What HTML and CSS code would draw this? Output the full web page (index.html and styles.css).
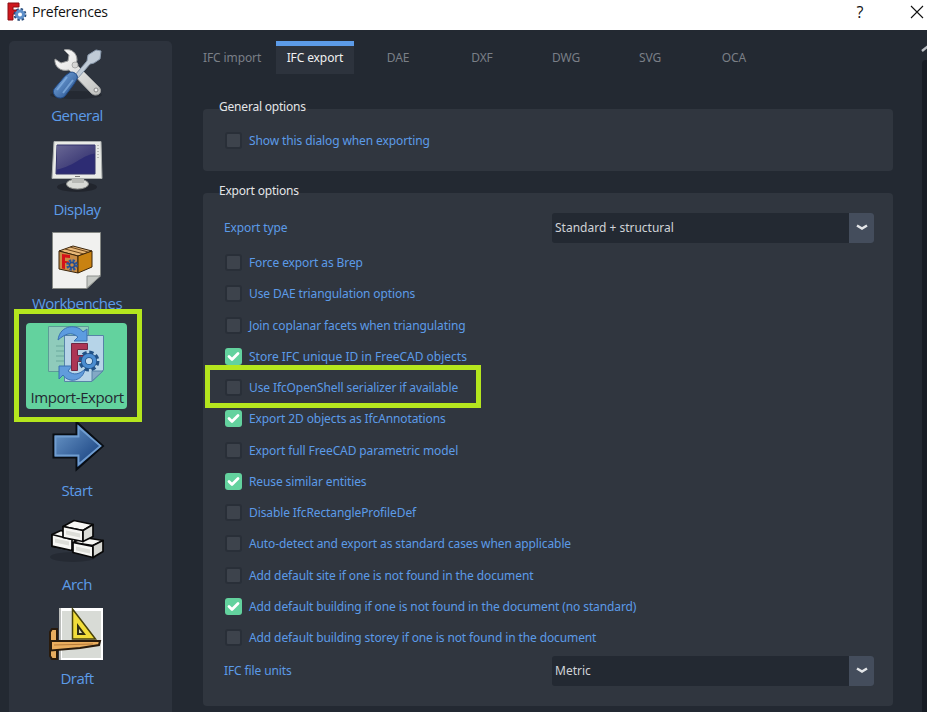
FILE: index.html
```html
<!DOCTYPE html>
<html lang="en">
<head>
<meta charset="utf-8">
<title>Preferences</title>
<link rel="stylesheet" href="styles.css">
</head>
<body>
<header class="titlebar">
  <svg class="logo" viewBox="0 0 20 20"><path d="M1 1h11v4H6v3h4v4H6v6H1z" fill="#cf171d" stroke="#8a1015"/><circle cx="13" cy="12.5" r="5.2" fill="none" stroke="#294d7b" stroke-width="2.5" stroke-dasharray="2.3 1.78"/><circle cx="13" cy="12.5" r="3.5" fill="#fff" stroke="#5d8fc9" stroke-width="3"/></svg>
  <span class="caption">Preferences</span>
  <span class="help">?</span>
  <svg class="close" viewBox="0 0 14 14"><path d="M1 1l12 12M13 1L1 13" stroke="#111" stroke-width="1.1"/></svg>
</header>
<main class="window">
  <nav class="sidebar">
    <div class="item">
      <svg viewBox="0 0 56 56"><defs><linearGradient id="metal" x1="0" y1="0" x2="1" y2="1"><stop stop-color="#fff"/><stop offset="1" stop-color="#bfc0be"/></linearGradient><linearGradient id="blue" x1="0" y1="0" x2="1" y2="1"><stop stop-color="#7fb0e6"/><stop offset="1" stop-color="#204a87"/></linearGradient></defs>
        <ellipse cx="27" cy="49" rx="26" ry="4" fill="#20252d" opacity=".65"/>
        <path d="M15 4c7-2 13 3 13 10l-1 4 23 23c5 6-3 11-8 6L20 24c-9 2-15-4-14-11l6 4 7-2 1-6z" fill="url(#metal)" stroke="#9c9e9e"/>
        <circle cx="26" cy="19" r="3" fill="#d6d6d5" stroke="#aaa"/><circle cx="47" cy="44" r="2" fill="#eee" stroke="#888"/>
        <path d="M26 29l12-14 1-6 8-5 5 1-1 8-6 4-4 1-12 14z" fill="#c0cbd7" stroke="#8999ac"/>
        <path d="M20 27c4-3 10 2 8 6l-3 5-9 12c-5 5-14 0-11-7l11-13z" fill="url(#blue)" stroke="#204a87"/><path d="M18 31L8 44M24 34L14 47" stroke="#88b4e4" stroke-width="2" opacity=".7"/>
      </svg><span>General</span>
    </div>
    <div class="item">
      <svg viewBox="0 0 56 56"><defs><linearGradient id="screen" x1="0" y1="0" x2="1" y2="1"><stop stop-color="#77759c"/><stop offset="1" stop-color="#292767"/></linearGradient></defs>
        <ellipse cx="28" cy="47" rx="20" ry="5" fill="#1c2027" opacity=".7"/><ellipse cx="28.500" cy="44" rx="11" ry="5" fill="#d8dad6" stroke="#90928f"/><path d="M23 38h12v5H23z" fill="#b8bab6"/>
        <path d="M5 1.500h47l1 37H3z" fill="#e9ebe7" stroke="#aaaead"/><path d="M8 5h38v29H7z" fill="#2d2c73" stroke="#34346a"/><path d="M8 5.500h38v8c-14 2-19 12-38 16z" fill="url(#screen)" opacity=".8"/><path d="M49 5v13" stroke="#888" stroke-dasharray="1 2"/><path d="M26 36.500h5" stroke="#777"/>
      </svg><span>Display</span>
    </div>
    <div class="item">
      <svg viewBox="0 0 56 56"><path d="M3.500-1.500h48V41L38 54.500H3.500z" fill="#f1f1ef" stroke="#858884"/><path d="M38 54V42h13.500z" fill="#c5c8c4" stroke="#8e918e"/>
        <path d="M10 17L24 12 43 17 29 22z" fill="#e8b878" stroke="#3b250b"/><path d="M10 17l19 5v17l-19-4z" fill="#c98c45" stroke="#3b250b"/><path d="M29 22l14-5v16l-14 6z" fill="#c98211" stroke="#3b250b"/><path d="M16 15l19 5M21 13l18 5" stroke="#6d461b"/><path d="M13 20l8 1v3l-5-.5V27l4 .5v2l-4-.5v6l-3-.6z" fill="#d51218"/><circle cx="23" cy="31" r="4" fill="none" stroke="#29569d" stroke-width="3.500" stroke-dasharray="2 1.140"/><circle cx="23" cy="31" r="2.500" fill="none" stroke="#244b8e" stroke-width="1.500"/>
      </svg><span>Workbenches</span>
    </div>
    <div class="item selected">
      <svg viewBox="0 0 56 56"><path d="M-.5-1.500h40v45h-40z" fill="#8fcbbb" stroke="#5c9b97"/><path d="M7 18h8M7 23h8M7 28h8M7 33h8" stroke="#6ba99d"/>
        <path d="M15.500 7.500h39V42L43 53.500H15.500z" fill="#b6d4e8" stroke="#5684a7"/><path d="M43 53V43h11z" fill="#83a9c5" stroke="#5684a7"/>
        <path d="M9 12C11-4 29-4 34 4l4-3v12H25l4-4C22 3 16 6 9 12z" fill="#5c9ce0" stroke="#3971b1"/>
        <path d="M10 38h13l-4 5c6 5 12 3 17-2-2 12-16 15-22 6l-4 4z" fill="#619cdc" stroke="#3971b1"/>
        <path d="M22.500 15.500h16v6h-10v6h7v6h-7v9h-6z" fill="#ad3555" stroke="#702642"/>
        <circle cx="40" cy="33" r="8.200" fill="none" stroke="#225286" stroke-width="4.500" stroke-dasharray="4 2.440"/><circle cx="40" cy="33" r="5.600" fill="#c5dced" stroke="#225286" stroke-width="5"/><circle cx="40" cy="33" r="5.600" fill="none" stroke="#4a8dd1" stroke-width="3.500"/>
      </svg><span>Import-Export</span>
    </div>
    <div class="item">
      <svg viewBox="0 0 56 56"><defs><linearGradient id="arrow" x1="0" y1="0" x2="1" y2="1"><stop stop-color="#729fcf"/><stop offset=".8" stop-color="#204a87"/></linearGradient></defs><path d="M4.500 13.500h23V1L54 25 27.500 48.500v-12h-23z" fill="url(#arrow)" stroke="#080d13" stroke-width="2"/><path d="M6.500 15.500h23V6L51.500 25 29.500 43.500v-9h-23z" fill="none" stroke="#709dd0" stroke-width="1.800"/></svg><span>Start</span>
    </div>
    <div class="item">
      <svg viewBox="0 0 56 56"><ellipse cx="24" cy="42" rx="23" ry="5" fill="#20252d" opacity=".6"/><g transform="translate(0 1.500)"><g fill="#f6f6f3" stroke="#080808" stroke-width="1.700" stroke-linejoin="round"><path d="M3 18l9-4 14 5v15L3 30z"/><path d="M3 18l20 5v11L3 29.500z"/><path d="M24 26l11-5 19 3-10 5z"/><path d="M24 26l20 4v11l-20-5z"/><path d="M44 29l10-5v11l-10 6z" fill="#d5d6d1"/><path d="M14 10L25 4l19 4-10 6z"/><path d="M14 10l20 4v11l-20-4z"/><path d="M34 14l10-6v12l-10 5z" fill="#dcddd8"/></g><path d="M17 14l14 3v4l-14-3zM6 22l14 3v4L6 26zM27 30l14 3v4l-14-3z" fill="#ddded9"/></g></svg><span>Arch</span>
    </div>
    <div class="item">
      <svg viewBox="0 0 56 56"><path d="M10-1h44v52H10z" fill="#fff"/><path d="M13 2h39v47H13z" fill="#d8dbd6"/><path d="M10-1h2v52h-2z" fill="#bbbdbb"/><path d="M23.500 0v30h23z" fill="#f1dd3a" stroke="#48420b" stroke-width="1.500"/><path d="M29 17v8h6z" fill="#e0e0bd" stroke="#302e13" stroke-width="2"/><path d="M3 20h5v30H3L1 47V23z" fill="#e7ad5f" stroke="#281a0c" stroke-width="2"/><path d="M2 32h49l-1 4-19 3-29 2.500z" fill="#e9ad5e" stroke="#281a0c" stroke-width="2"/><path d="M5 36l39-1" stroke="#b77b3a"/></svg><span>Draft</span>
    </div>
    <div class="mark mark-nav"></div>
  </nav>
  <section class="content">
    <div class="tabs"><span class="tab wide">IFC import</span><span class="tab active">IFC export</span><span class="tab">DAE</span><span class="tab">DXF</span><span class="tab">DWG</span><span class="tab">SVG</span><span class="tab">OCA</span></div>
    <h2>General options</h2>
    <div class="group general"><label class="check"><i></i><span>Show this dialog when exporting</span></label></div>
    <h2>Export options</h2>
    <div class="group export">
      <div class="field"><span>Export type</span><div class="select"><span>Standard + structural</span><b><svg viewBox="0 0 12 8"><path d="M1 1.500l5 3 5-3" /></svg></b></div></div>
      <div class="checks">
        <label class="check"><i></i><span>Force export as Brep</span></label>
        <label class="check"><i></i><span>Use DAE triangulation options</span></label>
        <label class="check"><i></i><span>Join coplanar facets when triangulating</span></label>
        <label class="check normal"><i class="on"><svg viewBox="0 0 17 17"><path d="M4 8.500l3 3 6-6"/></svg></i><span>Store IFC unique ID in FreeCAD objects</span></label>
        <label class="check"><i></i><span>Use IfcOpenShell serializer if available</span></label>
        <label class="check"><i class="on"><svg viewBox="0 0 17 17"><path d="M4 8.500l3 3 6-6"/></svg></i><span>Export 2D objects as IfcAnnotations</span></label>
        <label class="check"><i></i><span>Export full FreeCAD parametric model</span></label>
        <label class="check"><i class="on"><svg viewBox="0 0 17 17"><path d="M4 8.500l3 3 6-6"/></svg></i><span>Reuse similar entities</span></label>
        <label class="check"><i></i><span>Disable IfcRectangleProfileDef</span></label>
        <label class="check"><i></i><span>Auto-detect and export as standard cases when applicable</span></label>
        <label class="check"><i></i><span>Add default site if one is not found in the document</span></label>
        <label class="check"><i class="on"><svg viewBox="0 0 17 17"><path d="M4 8.500l3 3 6-6"/></svg></i><span>Add default building if one is not found in the document (no standard)</span></label>
        <label class="check"><i></i><span>Add default building storey if one is not found in the document</span></label>
      </div>
      <div class="field units"><span>IFC file units</span><div class="select"><span>Metric</span><b><svg viewBox="0 0 12 8"><path d="M1 1.500l5 3 5-3" /></svg></b></div></div>
      <div class="mark mark-row"></div>
    </div>
  </section>
  <aside class="scroll"><svg viewBox="0 0 12 8"><path d="M1 6l5-4 5 4" /></svg><div class="track"></div></aside>
</main>
</body>
</html>
```

FILE: styles.css
```css
* { box-sizing: border-box; }
body { margin: 0; width: 927px; height: 712px; overflow: hidden; background: #232932; font: 12px/16px "Noto Sans", sans-serif; color: #5c9be8; }
svg { display: block; fill: none; overflow: visible; }
.titlebar { height: 30px; background: #fff; color: #111; display: flex; align-items: center; padding: 0 3px 6px 7px; font: 14px/20px "Open Sans", sans-serif; }
.logo { width: 20px; height: 20px; margin-right: 5px; }
.caption { flex: 1; letter-spacing: -.2px; }
.help { width: 14px; margin-right: 43px; text-align: center; font-size: 16px; }
.close { width: 14px; height: 14px; }
.window { display: flex; height: 682px; }
.sidebar { position: relative; width: 163px; margin: 11px 0 0 9px; padding-left: 17px; background: #2d333d; border-radius: 5px 5px 0 0; display: flex; flex-direction: column; gap: 7.800px; }
.item { width: 101px; height: 86px; flex: none; display: flex; flex-direction: column; align-items: center; padding-top: 5px; font: 15px/20px "Open Sans", sans-serif; border-radius: 4px; }
.item svg { width: 56px; height: 56px; margin-bottom: 3px; }
.item span { white-space: nowrap; letter-spacing: -.5px; margin-left: 1px; }
.item.selected span { letter-spacing: -.4px; }
.selected { background: #63d29e; color: #232932; margin-top: .6px; margin-bottom: -.6px; }
.mark { position: absolute; border: 5px solid #b4e61e; }
.mark-nav { left: 5px; top: 268px; width: 128px; height: 113px; }
.mark-row { left: 2px; top: 172px; width: 276px; height: 43px; }
.content { width: 690px; margin-left: 31px; padding-top: 11px; letter-spacing: -.11px; }
.tabs { display: flex; height: 33px; margin-bottom: 25px; color: #7a7f87; }
.tab { width: 84px; text-align: center; line-height: 33px; }
.tab.wide { width: 73px; text-align: left; white-space: nowrap; }
.tab.active { width: 78px; margin-right: 2px; color: #f0f0f0; background: #2d333d; border-top: 5px solid #5c9be8; line-height: 23px; }
h2 { position: relative; z-index: 1; margin: 0 0 -6px 16px; font-size: 12px; line-height: 16px; font-weight: 400; color: #e3e5e8; letter-spacing: -.2px; }
.group { background: #30363f; border-radius: 4px; }
.general { height: 62px; padding: 16px 0 0 22px; margin-bottom: 12px; }
.export { position: relative; height: 513px; padding: 20px 19px 0 21px; }
.field { display: flex; align-items: center; justify-content: space-between; height: 30px; }
.select { width: 322px; height: 30px; display: flex; background: #232932; border-radius: 3px; color: #d0d3d7; line-height: 29px; overflow: hidden; letter-spacing: 0; }
.select span { flex: 1; padding-left: 3px; }
.select b { width: 25px; background: #444d5c; display: flex; align-items: center; justify-content: center; }
.select svg, .scroll svg { width: 12px; height: 8px; stroke: #e3e5e8; stroke-width: 2.500; }
.checks { display: grid; grid-template-rows: repeat(13, 31.250px); margin: 4px 0 0 1px; }
.check { display: flex; align-items: center; height: 31px; gap: 7px; white-space: nowrap; }
.check span { padding-top: 1px; }
.check.normal { letter-spacing: 0; }
.check i { width: 17px; height: 17px; background: #3d434c; border: 2px solid #292f38; border-radius: 3px; }
.check i.on { background: #63d29e; border: 0; }
.check i svg { stroke: #fff; stroke-width: 2.800; stroke-linecap: round; stroke-linejoin: round; }
.units { margin-top: 3px; }
.scroll { margin-left: 28px; width: 6px; padding-top: 15px; }
.scroll svg { stroke: #b9bdc3; }
.track { margin-top: 7px; margin-left: 1px; width: 5px; height: 652px; background: #171c24; border-radius: 4px 0 0 0; }
```
